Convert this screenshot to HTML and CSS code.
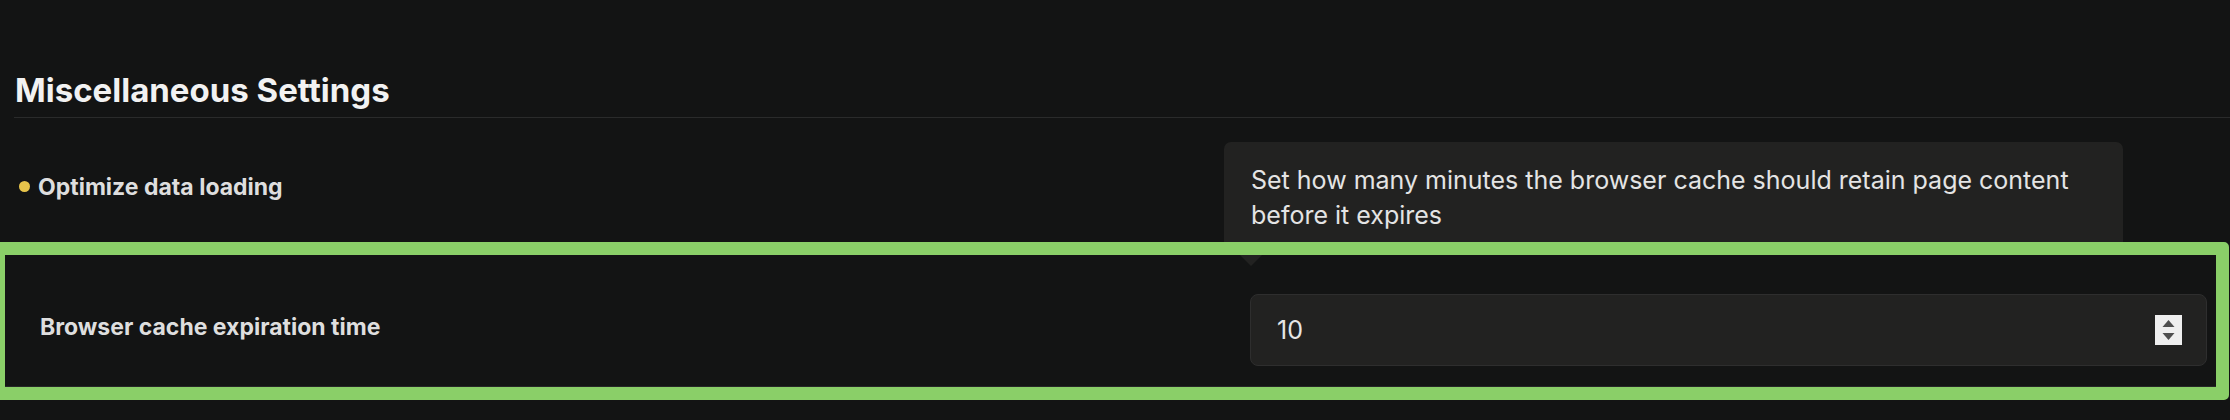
FILE: index.html
```html
<!DOCTYPE html>
<html lang="en">
<head>
<meta charset="utf-8">
<title>Miscellaneous Settings</title>
<link rel="stylesheet" href="styles.css">
</head>
<body>
<section class="settings">
  <h2 class="section-title">Miscellaneous Settings</h2>
  <div class="row row-plain">
    <span class="dot"></span>
    <span class="label">Optimize data loading</span>
  </div>
  <div class="row row-focus">
    <div class="tooltip">Set how many minutes the browser cache should retain page content before it expires</div>
    <span class="label label-focus">Browser cache expiration time</span>
    <div class="number-field">
      <span class="number-value">10</span>
      <svg class="spinner" width="27" height="30" viewBox="0 0 27 30" aria-hidden="true">
        <rect width="27" height="30" fill="#efefef"/>
        <polygon points="13.5,5 19.5,12 7.5,12" fill="#4f4f4f"/>
        <polygon points="7.5,18 19.5,18 13.5,25" fill="#4f4f4f"/>
      </svg>
    </div>
  </div>
</section>
</body>
</html>
```

FILE: styles.css
```css
html, body {
  margin: 0;
  padding: 0;
}
body {
  background: #131414;
  font-family: Inter, "Noto Sans", "Liberation Sans", sans-serif;
  width: 2230px;
  height: 420px;
  overflow: hidden;
}
.settings {
  display: flex;
  flex-direction: column;
}
.section-title {
  margin: 0 0 0 14px;
  padding: 70px 0 7px 1px;
  font-size: 33px;
  line-height: 40px;
  font-weight: 700;
  color: #f2f2f2;
  border-bottom: 1px solid #2a2b2b;
}
.row {
  display: flex;
  align-items: center;
}
.row-plain {
  height: 137px;
  padding-left: 19px;
  gap: 8px;
}
.dot {
  width: 11px;
  height: 11px;
  border-radius: 50%;
  background: #e7c44b;
  flex: none;
}
.label {
  font-size: 23px;
  font-weight: 700;
  color: #dedede;
  line-height: 28px;
}
.row-focus {
  position: relative;
  margin: 0 14px 0 5px;
  padding: 39px 9px 20px 35px;
  border-bottom: 1px solid #262727;
  height: 72px;
  box-sizing: content-box;
}
.row-focus::after {
  content: "";
  position: absolute;
  top: -13px;
  left: -13px;
  right: -13px;
  bottom: -14px;
  border: 13px solid #8acf68;
  border-radius: 5px;
  pointer-events: none;
  z-index: 2;
}
.label-focus {
  flex: 1;
  margin-bottom: 7px;
}
.number-field {
  width: 957px;
  height: 72px;
  box-sizing: border-box;
  border: 1px solid #2e2e2e;
  border-radius: 8px;
  background: #222221;
  display: flex;
  align-items: center;
  justify-content: space-between;
  padding: 0 24px 0 26px;
  flex: none;
}
.number-value {
  font-size: 25px;
  color: #e6e6e6;
  line-height: 30px;
}
.spinner {
  display: block;
}
.tooltip {
  position: absolute;
  left: 1219px;
  bottom: 100%;
  width: 899px;
  box-sizing: border-box;
  padding: 21px 36px 22px 27px;
  background: #222221;
  border-radius: 7px;
  color: #e4e4e4;
  font-size: 25px;
  line-height: 35px;
  z-index: 1;
}
.tooltip::after {
  content: "";
  position: absolute;
  left: 16px;
  top: 100%;
  border-left: 11px solid transparent;
  border-right: 11px solid transparent;
  border-top: 11px solid #222221;
}
```
